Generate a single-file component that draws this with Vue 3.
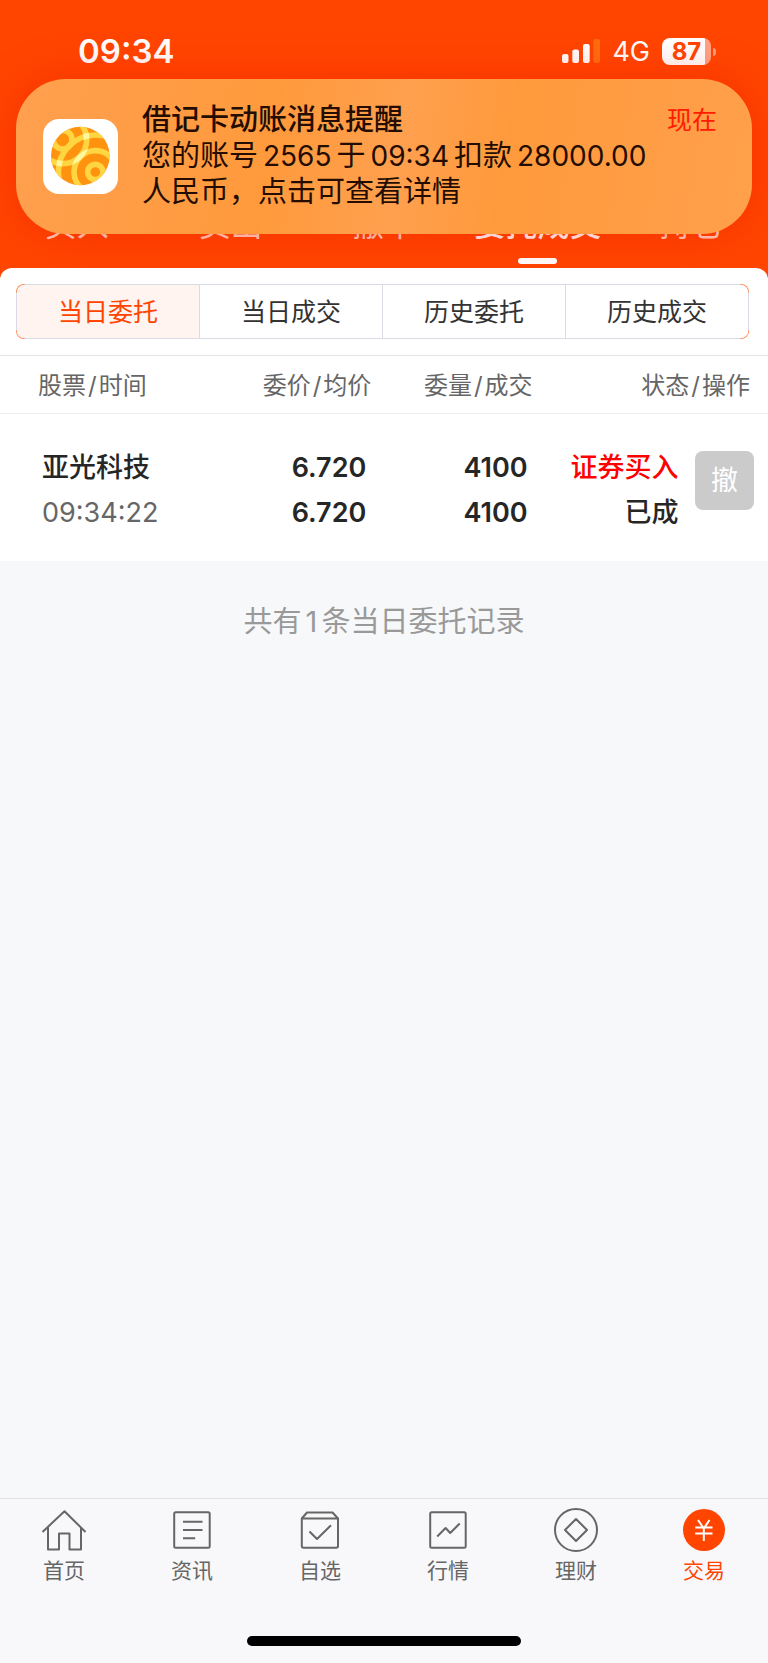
<script setup>
import { ref } from 'vue'

const topTabs = ['买入', '卖出', '撤单', '委托成交', '持仓']
const segments = ['当日委托', '当日成交', '历史委托', '历史成交']
const activeSegment = ref('当日委托')
const columns = [
  { a: '股票', b: '时间', span: 1 },
  { a: '委价', b: '均价', span: 1 },
  { a: '委量', b: '成交', span: 1 },
  { a: '状态', b: '操作', span: 2 }
]
const orders = [
  { name: '亚光科技', time: '09:34:22', price: '6.720', avg: '6.720', qty: '4100', done: '4100', side: '证券买入', state: '已成' }
]
const navItems = [
  { id: 'home', label: '首页' },
  { id: 'news', label: '资讯' },
  { id: 'watch', label: '自选' },
  { id: 'market', label: '行情' },
  { id: 'wealth', label: '理财' },
  { id: 'trade', label: '交易' }
]
</script>

<template>
  <div class="app">
    <header class="top">
      <div class="status">
        <span class="clock">09:34</span>
        <div class="indicators">
          <svg class="signal" width="38" height="24" viewBox="0 0 38 24" aria-hidden="true">
            <rect x="0" y="15" width="6.5" height="9" rx="2" fill="#fff" />
            <rect x="10.3" y="10.5" width="6.7" height="13.5" rx="2" fill="#fff" />
            <rect x="21" y="5" width="6.7" height="19" rx="2" fill="#fff" />
            <rect x="31.3" y="0" width="6.7" height="24" rx="2" fill="#ff6d10" />
          </svg>
          <span class="network">4G</span>
          <div class="battery">87</div>
        </div>
      </div>
      <nav class="tabs">
        <a v-for="t in topTabs" :key="t" href="#" :class="{ on: t === '委托成交' }">{{ t }}</a>
      </nav>
    </header>

    <aside class="notice">
      <svg class="logo" viewBox="23 28 225 225" aria-hidden="true">
        <defs>
          <clipPath id="ball"><circle cx="135" cy="139" r="88" /></clipPath>
          <clipPath id="ringBand">
            <path clip-rule="evenodd" d="M163 90a81 81 0 1 1-162 0a81 81 0 1 1 162 0ZM145 90a63 63 0 1 0-126 0a63 63 0 1 0 126 0Z" />
          </clipPath>
        </defs>
        <rect x="23" y="28" width="225" height="225" rx="48" fill="#fff" />
        <g clip-path="url(#ball)" fill="none">
          <rect x="40" y="45" width="190" height="190" fill="#ff930f" />
          <g stroke="#ffd541" stroke-width="17">
            <circle cx="82" cy="90" r="28" />
            <circle cx="82" cy="90" r="72" />
            <circle cx="180" cy="187" r="23" />
            <circle cx="180" cy="187" r="64" />
            <circle cx="180" cy="187" r="111" />
          </g>
          <g stroke="#fff7a0" stroke-width="17" clip-path="url(#ringBand)">
            <circle cx="180" cy="187" r="64" />
            <circle cx="180" cy="187" r="111" />
          </g>
        </g>
      </svg>
      <div class="message">
        <div class="message-head">
          <strong>借记卡动账消息提醒</strong>
          <time>现在</time>
        </div>
        <p>您的账号<span class="num">2565</span>于<span class="num">09:34</span>扣款<span class="num">28000.00</span><br />人民币，点击可查看详情</p>
      </div>
    </aside>

    <main class="panel">
      <div class="segments">
        <button
          v-for="s in segments"
          :key="s"
          type="button"
          :class="{ on: s === activeSegment }"
          @click="activeSegment = s"
        >{{ s }}</button>
      </div>
      <table>
        <colgroup>
          <col class="c-name" /><col class="c-num" /><col class="c-num" /><col class="c-state" /><col class="c-act" />
        </colgroup>
        <thead>
          <tr>
            <th v-for="c in columns" :key="c.a" :colspan="c.span">{{ c.a }}<span class="slash">/</span>{{ c.b }}</th>
          </tr>
        </thead>
        <tbody>
          <tr v-for="o in orders" :key="o.time">
            <td><div>{{ o.name }}</div><div class="muted">{{ o.time }}</div></td>
            <td><div>{{ o.price }}</div><div>{{ o.avg }}</div></td>
            <td><div>{{ o.qty }}</div><div>{{ o.done }}</div></td>
            <td><div class="buy">{{ o.side }}</div><div>{{ o.state }}</div></td>
            <td class="action"><button type="button">撤</button></td>
          </tr>
        </tbody>
      </table>
    </main>
    <p class="summary">共有<span class="count">{{ orders.length }}</span>条当日委托记录</p>

    <footer class="bottom">
      <nav>
        <a v-for="n in navItems" :key="n.id" href="#" :class="{ on: n.id === 'trade' }">
          <svg width="48" height="48" viewBox="0 0 48 48" aria-hidden="true">
            <g v-if="n.id === 'home'">
              <path d="M2.5 26 24.5 5.2 45.5 26M8 21.5V43.5H19V27.5H29.5V43.5H41V21.5" />
            </g>
            <g v-else-if="n.id === 'news'">
              <rect x="6.2" y="6.2" width="35.5" height="35.5" rx="1.5" />
              <path d="M15 15.7H34.5M15 24H34.5M15 32.2H27.2" />
            </g>
            <g v-else-if="n.id === 'watch'">
              <path d="M5.8 12.5 11 6.5H36.5L42 12.5V40Q42 41.7 40.3 41.7H7.5Q5.8 41.7 5.8 40ZM5.8 12.5H42M13.5 25.5 21 33 35 19.3" />
            </g>
            <g v-else-if="n.id === 'market'">
              <rect x="6.2" y="6.2" width="35.5" height="35.5" rx="1.5" />
              <path d="M13.2 30.5 21.6 22 26.2 27 35.7 17.5" />
            </g>
            <g v-else-if="n.id === 'wealth'">
              <circle cx="24" cy="24" r="21" />
              <path d="M24 13 35 24 24 35 13 24Z" />
            </g>
            <g v-else>
              <circle class="disc" cx="24" cy="24" r="21" />
              <path class="yen" d="M18 14 23.8 22.5 29.5 14M15.2 21.5H32.5M15.2 27.5H32.5M23.8 21.5V35" />
            </g>
          </svg>
          <span>{{ n.label }}</span>
        </a>
      </nav>
      <div class="home-bar"></div>
    </footer>
  </div>
</template>

<style>
body {
  margin: 0;
}
</style>

<style scoped>
* {
  box-sizing: border-box;
}
.app {
  position: relative;
  display: flex;
  flex-direction: column;
  min-height: 100vh;
  background: #f7f8fa;
  color: #262626;
  font-family: Inter, "Noto Sans CJK SC", sans-serif;
}
a {
  color: inherit;
  text-decoration: none;
}
button {
  padding: 0 0 4px;
  font-family: inherit;
}
p {
  margin: 0;
}
.top {
  padding: 31px 0 14px;
  background: #ff4500;
  color: #fff;
}
.status {
  display: flex;
  justify-content: space-between;
  align-items: center;
  height: 40px;
  padding: 0 57px 0 78px;
}
.clock {
  font-size: 33px;
  font-weight: 600;
}
.indicators {
  display: flex;
  align-items: center;
}
.network {
  margin: 0 12px;
  font-size: 27px;
}
.battery {
  position: relative;
  width: 49px;
  height: 27px;
  border-radius: 8px;
  background: linear-gradient(to right, #fff 43px, #ffa283 43px);
  color: #ff4500;
  font-size: 24px;
  font-weight: 700;
  line-height: 27px;
  text-align: center;
}
.battery::after {
  content: "";
  position: absolute;
  right: -5px;
  top: 10px;
  width: 3px;
  height: 8px;
  border-radius: 0 3px 3px 0;
  background: #ff9a78;
}
.tabs {
  display: grid;
  grid-template-columns: repeat(5, 1fr);
  margin-top: 131px;
}
.tabs a {
  display: flex;
  flex-direction: column;
  align-items: center;
  color: #ffd5c6;
  font-size: 32px;
  line-height: 46px;
}
.tabs a::after {
  content: "";
  width: 39px;
  height: 6px;
  margin-top: 10px;
  border-radius: 3px;
}
.tabs .on {
  color: #fff;
  font-weight: 500;
}
.tabs .on::after {
  background: #fff;
}
.notice {
  position: absolute;
  top: 79px;
  left: 16px;
  right: 16px;
  display: flex;
  align-items: center;
  gap: 24px;
  padding: 23px 35px 24px 27px;
  border-radius: 50px;
  background: linear-gradient(100deg, #ffa04f, #ff9a3c 35%, #ffa04f 52%, #ff9a3c 66%, #ffa04c);
  box-shadow: 0 0 44px rgba(236, 20, 0, 0.4);
  color: #240d00;
}
.logo {
  flex: none;
  width: 75px;
  height: 75px;
}
.message {
  flex: 1;
  font-size: 29px;
  line-height: 36px;
}
.message-head {
  display: flex;
  justify-content: space-between;
}
.message-head strong {
  font-weight: 500;
}
.message-head time {
  color: #ff1a00;
  font-size: 25px;
}
.num {
  margin: 0 5px;
  font-size: 28px;
}
.panel {
  position: relative;
  margin-top: -10px;
  padding-top: 16px;
  border-radius: 12px 12px 0 0;
  background: #fff;
}
.segments {
  display: flex;
  height: 55px;
  margin: 0 19px 16px 16px;
  border: 1px solid transparent;
  border-radius: 8px;
  background:
    linear-gradient(#fff, #fff) padding-box,
    radial-gradient(circle at 0 0, #ff8850 8px, transparent 9px) border-box,
    radial-gradient(circle at 100% 0, #ff8850 8px, transparent 9px) border-box,
    radial-gradient(circle at 0 100%, #ff8850 8px, transparent 9px) border-box,
    radial-gradient(circle at 100% 100%, #ff8850 8px, transparent 9px) border-box,
    linear-gradient(#d9dce4, #d9dce4) border-box;
  overflow: hidden;
}
.segments button {
  flex: 1;
  border: 0;
  border-left: 1px solid #d9dce4;
  background: #fff;
  color: #333;
  font-size: 25px;
}
.segments button:first-child {
  border-left: 0;
}
.segments .on {
  background: #fff4f0;
  color: #ff4500;
}
table {
  width: 100%;
  table-layout: fixed;
  border-collapse: collapse;
}
.c-name {
  width: 28%;
}
.c-num {
  width: 21%;
}
.c-state {
  width: 19%;
}
.c-act {
  width: 11%;
}
th {
  height: 58px;
  padding: 0 5px 3px 0;
  border-top: 1px solid #e4e4e6;
  border-bottom: 1px solid #ededef;
  color: #666;
  font-size: 24px;
  font-weight: 400;
  text-align: right;
  white-space: nowrap;
}
th:first-child {
  padding-left: 38px;
  text-align: left;
}
th:last-child {
  padding-right: 18px;
}
.slash {
  margin: 0 2px;
}
td {
  padding: 31px 10px 26px 0;
  font-size: 27px;
  font-weight: 600;
  line-height: 45px;
  text-align: right;
  vertical-align: top;
  white-space: nowrap;
}
td:first-child {
  padding-left: 42px;
  font-weight: 500;
  text-align: left;
}
td:nth-child(4) {
  padding-right: 5px;
  font-weight: 500;
}
td .muted {
  color: #666;
  font-weight: 400;
}
.buy {
  color: #f00;
}
td.action {
  padding: 37px 14px 0 0;
}
.action button {
  display: block;
  width: 59px;
  height: 59px;
  margin-left: auto;
  border: 0;
  border-radius: 8px;
  background: #cbcbcb;
  color: #fff;
  font-size: 27px;
}
.summary {
  margin-top: 39px;
  color: #999;
  font-size: 29px;
  line-height: 44px;
  text-align: center;
}
.count {
  margin: 0 4px;
}
.bottom {
  margin-top: auto;
  padding-bottom: 17px;
  border-top: 1px solid #dfe1e3;
  background: #f8f8fa;
}
.bottom nav {
  display: grid;
  grid-template-columns: repeat(6, 1fr);
  padding-top: 7px;
}
.bottom a {
  display: flex;
  flex-direction: column;
  align-items: center;
  gap: 3px;
  color: #666;
  font-size: 21px;
  line-height: 28px;
}
.bottom .on {
  color: #ff4500;
}
.bottom svg {
  fill: none;
  stroke: #666;
  stroke-width: 2;
  stroke-linejoin: round;
}
.bottom .disc {
  fill: #ff4500;
  stroke: none;
}
.bottom .yen {
  stroke: #fff;
}
.home-bar {
  width: 274px;
  height: 10px;
  margin: 51px auto 0;
  border-radius: 5px;
  background: #000;
}
</style>
